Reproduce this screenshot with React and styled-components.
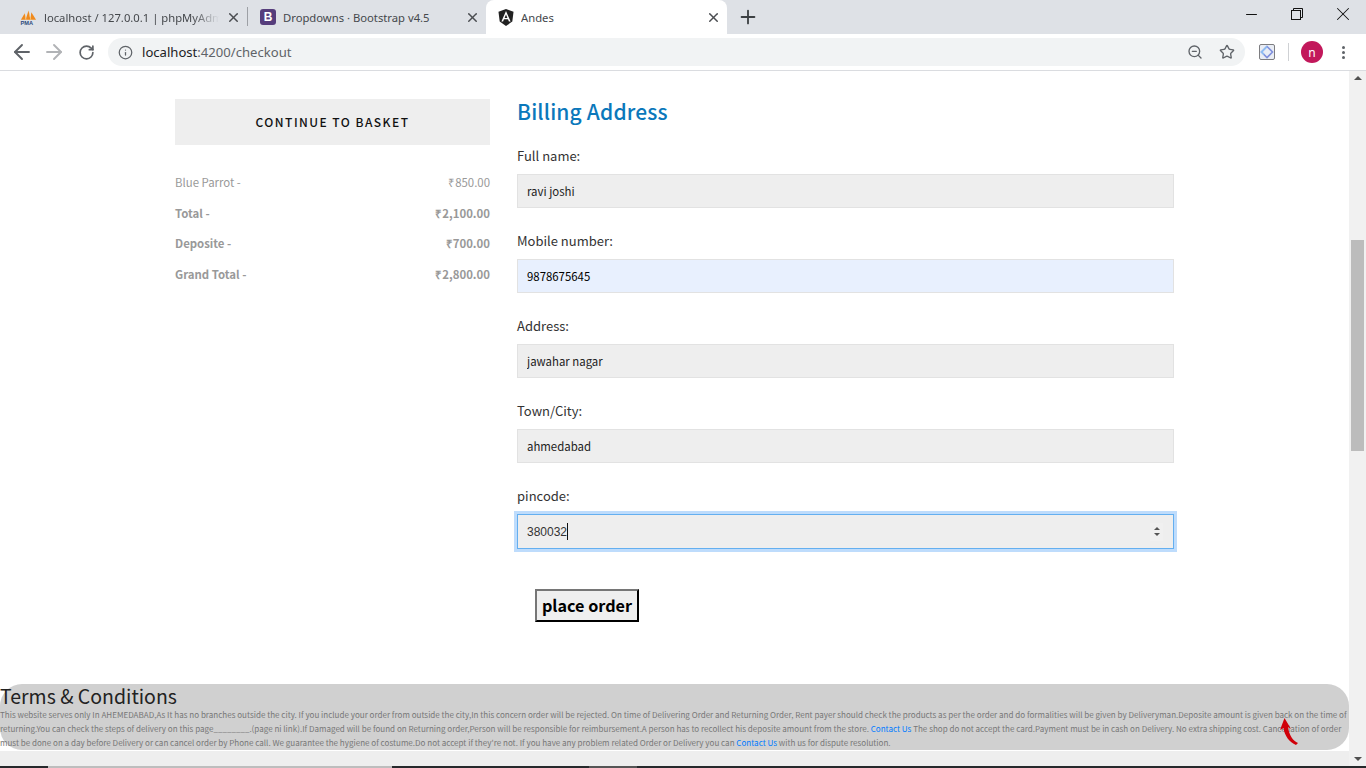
import React from "react";
import styled, { createGlobalStyle } from "styled-components";
import { ArrowLeft, ArrowRight, RotateCw, Info, ZoomOut, Star, X, Plus, Minus } from "lucide-react";

const source = `"Noto Sans CJK SC", "Source Sans Pro", sans-serif`;
const ui = `"Noto Sans", "Open Sans", sans-serif`;

const GlobalStyle = createGlobalStyle`
  html, body {
    margin: 0;
    padding: 0;
    overflow: hidden;
    background: #fff;
  }
  * {
    box-sizing: border-box;
  }
`;

const Screen = styled.div`
  width: 1366px;
  height: 768px;
  display: flex;
  flex-direction: column;
  overflow: hidden;
`;

/* browser chrome */
const TabStrip = styled.div`
  height: 34px;
  flex: none;
  display: flex;
  align-items: stretch;
  background: #dee1e6;
  padding-left: 8px;
`;

const Tab = styled.div`
  width: ${(p) => p.$width}px;
  display: flex;
  align-items: center;
  padding: 0 6px 0 12px;
  gap: 7px;
  position: relative;
  font: 11.25px ${ui};
  color: #45484c;
  background: ${(p) => (p.$active ? "#fff" : "transparent")};
  border-radius: ${(p) => (p.$active ? "8px 8px 0 0" : "0")};
`;

const TabDivider = styled.div`
  width: 1px;
  height: 19px;
  align-self: center;
  margin-top: -2px;
  background: #9da0a5;
`;

const TabTitle = styled.span`
  flex: 1;
  white-space: nowrap;
  overflow: hidden;
  ${(p) =>
    p.$fade &&
    "-webkit-mask-image: linear-gradient(to right, #000 85%, transparent 100%);"}
`;

const TabClose = styled.span`
  display: flex;
  color: #4a4d51;
`;

const NewTab = styled.span`
  display: flex;
  align-items: center;
  margin-left: 10px;
  color: #3c4043;
`;

const WindowControls = styled.div`
  margin-left: auto;
  display: flex;
`;

const WindowButton = styled.span`
  width: 46px;
  display: flex;
  align-items: center;
  justify-content: center;
  margin-top: -6px;
  color: #111;
`;

const Toolbar = styled.div`
  height: 37px;
  flex: none;
  display: flex;
  align-items: center;
  padding: 0 6px;
  background: #fff;
  border-bottom: 1px solid #dadce0;
`;

const NavButton = styled.span`
  width: 32px;
  display: flex;
  justify-content: center;
  color: ${(p) => (p.$off ? "#b1b3b6" : "#5f6368")};
`;

const Omnibox = styled.div`
  width: 1137px;
  height: 28px;
  margin-left: 6px;
  display: flex;
  align-items: center;
  padding: 0 10px;
  border-radius: 14px;
  background: #f1f3f4;
  color: #5f6368;
`;

const Url = styled.span`
  margin-left: 9px;
  flex: 1;
  font: 13.1px ${ui};
  color: #5f6368;
  b {
    font-weight: 400;
    color: #202124;
  }
`;

const OmniIcon = styled.span`
  display: flex;
  margin-left: ${(p) => p.$gap || 0}px;
`;

const ExtensionIcon = styled.span`
  display: flex;
  margin-left: 14px;
`;

const ToolbarDivider = styled.span`
  width: 1px;
  height: 18px;
  margin-left: 13px;
  background: #cfd1d4;
`;

const Avatar = styled.span`
  width: 22px;
  height: 22px;
  margin-left: 12px;
  border-radius: 50%;
  background: #c2185b;
  color: #fff;
  display: flex;
  align-items: center;
  justify-content: center;
  font: 12px ${ui};
`;

const Dots = styled.span`
  margin-left: 19px;
  display: flex;
  flex-direction: column;
  gap: 2px;
  i {
    width: 3px;
    height: 3px;
    border-radius: 50%;
    background: #5f6368;
  }
`;

/* page + scrollbars */
const Viewport = styled.div`
  flex: 1;
  min-height: 0;
  display: flex;
`;

const Main = styled.div`
  flex: 1;
  min-width: 0;
  display: flex;
  flex-direction: column;
`;

const Page = styled.div`
  flex: 1;
  display: flex;
  flex-direction: column;
  background: #fff;
  padding-bottom: 1px;
  font-family: ${source};
`;

const HScroll = styled.div`
  height: 15px;
  flex: none;
  background: #eee;
`;

const VScroll = styled.div`
  width: 17px;
  flex: none;
  display: flex;
  flex-direction: column;
  align-items: center;
  padding-top: 5px;
  background: #f1f1f1;
`;

const ScrollThumb = styled.div`
  width: 13px;
  height: 211px;
  margin-top: 160px;
  background: #bcbcbc;
`;

const ScrollArrow = styled.span`
  width: 0;
  height: 0;
  border-left: 4px solid transparent;
  border-right: 4px solid transparent;
  ${(p) =>
    p.$down
      ? "border-top: 4px solid #505050; margin-top: auto; margin-bottom: 5px;"
      : "border-bottom: 4px solid #505050;"}
`;

const TaskStrip = styled.div`
  height: 2px;
  flex: none;
  display: flex;
  background: #26292b;
`;

const TaskItem = styled.span`
  width: ${(p) => p.$width}px;
  margin-left: ${(p) => p.$left}px;
  background: ${(p) => p.$color};
`;

/* checkout */
const Checkout = styled.div`
  display: flex;
  gap: 27px;
  padding: 28px 0 0 175px;
`;

const Summary = styled.div`
  width: 315px;
`;

const BasketButton = styled.div`
  height: 46px;
  margin-bottom: 21.6px;
  padding-bottom: 2px;
  display: flex;
  align-items: center;
  justify-content: center;
  background: #eee;
  color: #111;
  font-size: 12px;
  font-weight: 500;
  letter-spacing: 1.45px;
`;

const SummaryRow = styled.div`
  height: 30.67px;
  display: flex;
  align-items: center;
  justify-content: space-between;
  font-size: 11.4px;
  font-weight: ${(p) => (p.$bold ? 700 : 400)};
  color: #999;
`;

const Billing = styled.div`
  width: 657px;
`;

const Heading = styled.h2`
  margin: 0 0 21px;
  height: 26px;
  line-height: 25px;
  font-size: 21px;
  font-weight: 500;
  letter-spacing: 0.15px;
  color: #0b78bb;
`;

const Field = styled.div`
  margin-bottom: 23px;
`;

const Label = styled.label`
  display: block;
  height: 20px;
  line-height: 19px;
  margin-bottom: 8px;
  font-size: 13px;
  color: #333;
`;

const TextInput = styled.input`
  display: block;
  width: 100%;
  height: 34px;
  padding: 0 9px 1px;
  border: 1px solid #e2e2e2;
  outline: none;
  border-radius: 0;
  background: ${(p) => (p.$filled ? "#e8f0fe" : "#eee")};
  color: ${(p) => (p.$filled ? "#000" : "#222")};
  font: 11.4px ${source};
`;

const PinInput = styled.div`
  height: 35px;
  display: flex;
  align-items: center;
  padding: 0 10px 0 9px;
  border: 1px solid #64aff0;
  box-shadow: 0 0 0 3px #bedcfc;
  background: #eee;
  color: #333;
  font: 12px "Liberation Sans", sans-serif;
`;

const Caret = styled.span`
  width: 1px;
  height: 17px;
  background: #111;
`;

const Spinner = styled.span`
  margin-left: auto;
  width: 13px;
  height: 18px;
  display: flex;
  flex-direction: column;
  align-items: center;
  justify-content: center;
  gap: 3px;
  background: #f0f0f0;
`;

const SpinArrow = styled.i`
  width: 0;
  height: 0;
  border-left: 3px solid transparent;
  border-right: 3px solid transparent;
  ${(p) => (p.$down ? "border-top: 3px solid #555;" : "border-bottom: 3px solid #555;")}
`;

const PlaceOrder = styled.button`
  display: block;
  width: 104px;
  height: 33px;
  margin: 40px 0 0 18px;
  padding: 0 0 2px;
  white-space: nowrap;
  border: 2px outset #555;
  border-color: #767676 #222 #222 #767676;
  background: #efefef;
  color: #000;
  font: 700 16.2px ${source};
`;

/* terms */
const Terms = styled.div`
  margin-top: auto;
  height: 66px;
  position: relative;
  background: #d0d0d0;
  border-radius: 22px;
`;

const TermsTitle = styled.h3`
  margin: 0;
  height: 24px;
  line-height: 23px;
  font-size: 19.5px;
  font-weight: 400;
  color: #222;
`;

const TermsText = styled.p`
  margin: 0;
  width: 1349px;
  line-height: 14px;
  font-size: 8.05px;
  color: #777;
  a {
    color: #007bff;
    text-decoration: none;
  }
`;

const PointerArrow = styled.svg`
  position: absolute;
  left: 1279px;
  top: 33px;
`;

const PmaLogo = () => (
  <svg width="17" height="17" viewBox="0 0 18 17">
    <path d="M1 11 5 4l1 7zM6 11 9 1l2 10zM11 11l1-8 5 8z" fill="#f08a1d" />
    <path d="M5 4 6 11h1zM9 1l2 10h1z" fill="#fbc36b" />
    <text x="0.5" y="16.5" fontSize="6" fontWeight="700" fontFamily="Liberation Sans" fill="#2c4a7c">
      PMA
    </text>
  </svg>
);

const BootstrapLogo = styled.span`
  width: 16px;
  height: 16px;
  border-radius: 3px;
  background: #563d7c;
  color: #fff;
  display: flex;
  align-items: center;
  justify-content: center;
  font: 700 12px "Liberation Sans", sans-serif;
`;

const AngularLogo = () => (
  <svg width="16" height="17" viewBox="0 0 16 17">
    <path d="M8 0 .5 2.7l1.2 9.9L8 17l6.3-4.4 1.2-9.9z" fill="#222" />
    <path d="M8 2 3.4 12.6h1.7l.9-2.3h4l.9 2.3h1.7zm-1.4 7L8 5.6 9.4 9z" fill="#fff" />
  </svg>
);

const ExtensionGlyph = () => (
  <svg width="16" height="16" viewBox="0 0 16 16">
    <rect x="0.5" y="0.5" width="15" height="15" rx="1.5" fill="#e9edf5" stroke="#7d7d80" />
    <path d="M8 2.5 13.5 8 8 13.5 2.5 8z" fill="none" stroke="#7f8fdc" strokeWidth="1.6" />
    <path d="M8 2.5 2.5 8 5 10.5" fill="none" stroke="#8fc0f5" strokeWidth="1.6" />
  </svg>
);

const Restore = () => (
  <svg width="12" height="12" viewBox="0 0 12 12" fill="none" stroke="currentColor">
    <rect x="0.5" y="2.5" width="9" height="9" fill="#dee1e6" />
    <path d="M2.5 2.5v-2h9v9h-2" />
  </svg>
);

const summary = [
  { name: "Blue Parrot -", price: "₹850.00" },
  { name: "Total -", price: "₹2,100.00", bold: true },
  { name: "Deposite -", price: "₹700.00", bold: true },
  { name: "Grand Total -", price: "₹2,800.00", bold: true },
];

const fields = [
  { label: "Full name:", value: "ravi joshi" },
  { label: "Mobile number:", value: "9878675645", filled: true },
  { label: "Address:", value: "jawahar nagar" },
  { label: "Town/City:", value: "ahmedabad" },
];

const App = () => {
  return (
    <Screen>
      <GlobalStyle />
      <TabStrip>
        <Tab $width={239}>
          <PmaLogo />
          <TabTitle $fade>localhost / 127.0.0.1 | phpMyAdmin</TabTitle>
          <TabClose><X size={15} strokeWidth={2.4} /></TabClose>
        </Tab>
        <TabDivider />
        <Tab $width={238}>
          <BootstrapLogo>B</BootstrapLogo>
          <TabTitle>Dropdowns · Bootstrap v4.5</TabTitle>
          <TabClose><X size={15} strokeWidth={2.4} /></TabClose>
        </Tab>
        <Tab $width={241} $active>
          <AngularLogo />
          <TabTitle>Andes</TabTitle>
          <TabClose><X size={15} strokeWidth={2.4} /></TabClose>
        </Tab>
        <NewTab><Plus size={22} strokeWidth={2} /></NewTab>
        <WindowControls>
          <WindowButton><Minus size={17} strokeWidth={1.5} /></WindowButton>
          <WindowButton><Restore /></WindowButton>
          <WindowButton><X size={22} strokeWidth={1.1} /></WindowButton>
        </WindowControls>
      </TabStrip>
      <Toolbar>
        <NavButton><ArrowLeft size={24} strokeWidth={1.9} /></NavButton>
        <NavButton $off><ArrowRight size={24} strokeWidth={1.9} /></NavButton>
        <NavButton><RotateCw size={17} strokeWidth={2.4} /></NavButton>
        <Omnibox>
          <Info size={15} strokeWidth={2} />
          <Url><b>localhost</b>:4200/checkout</Url>
          <OmniIcon><ZoomOut size={16} strokeWidth={2} /></OmniIcon>
          <OmniIcon $gap={16}><Star size={16} strokeWidth={2} /></OmniIcon>
        </Omnibox>
        <ExtensionIcon><ExtensionGlyph /></ExtensionIcon>
        <ToolbarDivider />
        <Avatar>n</Avatar>
        <Dots><i /><i /><i /></Dots>
      </Toolbar>
      <Viewport>
        <Main>
          <Page>
            <Checkout>
              <Summary>
                <BasketButton>CONTINUE TO BASKET</BasketButton>
                {summary.map((row) => (
                  <SummaryRow key={row.name} $bold={row.bold}>
                    <span>{row.name}</span>
                    <span>{row.price}</span>
                  </SummaryRow>
                ))}
              </Summary>
              <Billing>
                <Heading>Billing Address</Heading>
                {fields.map((f) => (
                  <Field key={f.label}>
                    <Label>{f.label}</Label>
                    <TextInput readOnly value={f.value} $filled={f.filled} />
                  </Field>
                ))}
                <Label>pincode:</Label>
                <PinInput>
                  380032
                  <Caret />
                  <Spinner><SpinArrow /><SpinArrow $down /></Spinner>
                </PinInput>
                <PlaceOrder>place order</PlaceOrder>
              </Billing>
            </Checkout>
            <Terms>
              <TermsTitle>Terms &amp; Conditions</TermsTitle>
              <TermsText>
                This website serves only In AHEMEDABAD,As It has no branches outside the city. If you include your order from outside the city,In this concern order will be rejected. On time of Delivering Order and Returning Order, Rent payer should check the products as per the order and do formalities will be given by Deliveryman.Deposite amount is given back on the time of returning.You can check the steps of delivery on this page________.(page ni link).If Damaged will be found on Returning order,Person will be responsible for reimbursement.A person has to recollect his deposite amount from the store. <a href="#contact">Contact Us</a> The shop do not accept the card.Payment must be in cash on Delivery. No extra shipping cost. Cancellation of order must be done on a day before Delivery or can cancel order by Phone call. We guarantee the hygiene of costume.Do not accept if they're not. If you have any problem related Order or Delivery you can <a href="#contact">Contact Us</a> with us for dispute resolution.
              </TermsText>
              <PointerArrow width="20" height="30" viewBox="0 0 20 30">
                <path d="M5.5 1 1 13l3.5-2c1 8 6 14 12.5 17l2-2c-5-2-9-8-10-16l3 2z" fill="#d0000a" />
              </PointerArrow>
            </Terms>
          </Page>
          <HScroll />
        </Main>
        <VScroll>
          <ScrollArrow />
          <ScrollThumb />
          <ScrollArrow $down />
        </VScroll>
      </Viewport>
      <TaskStrip>
        <TaskItem $left={48} $width={344} $color="#bdbdbd" />
        <TaskItem $left={197} $width={48} $color="#555" />
      </TaskStrip>
    </Screen>
  );
};

export default App;
